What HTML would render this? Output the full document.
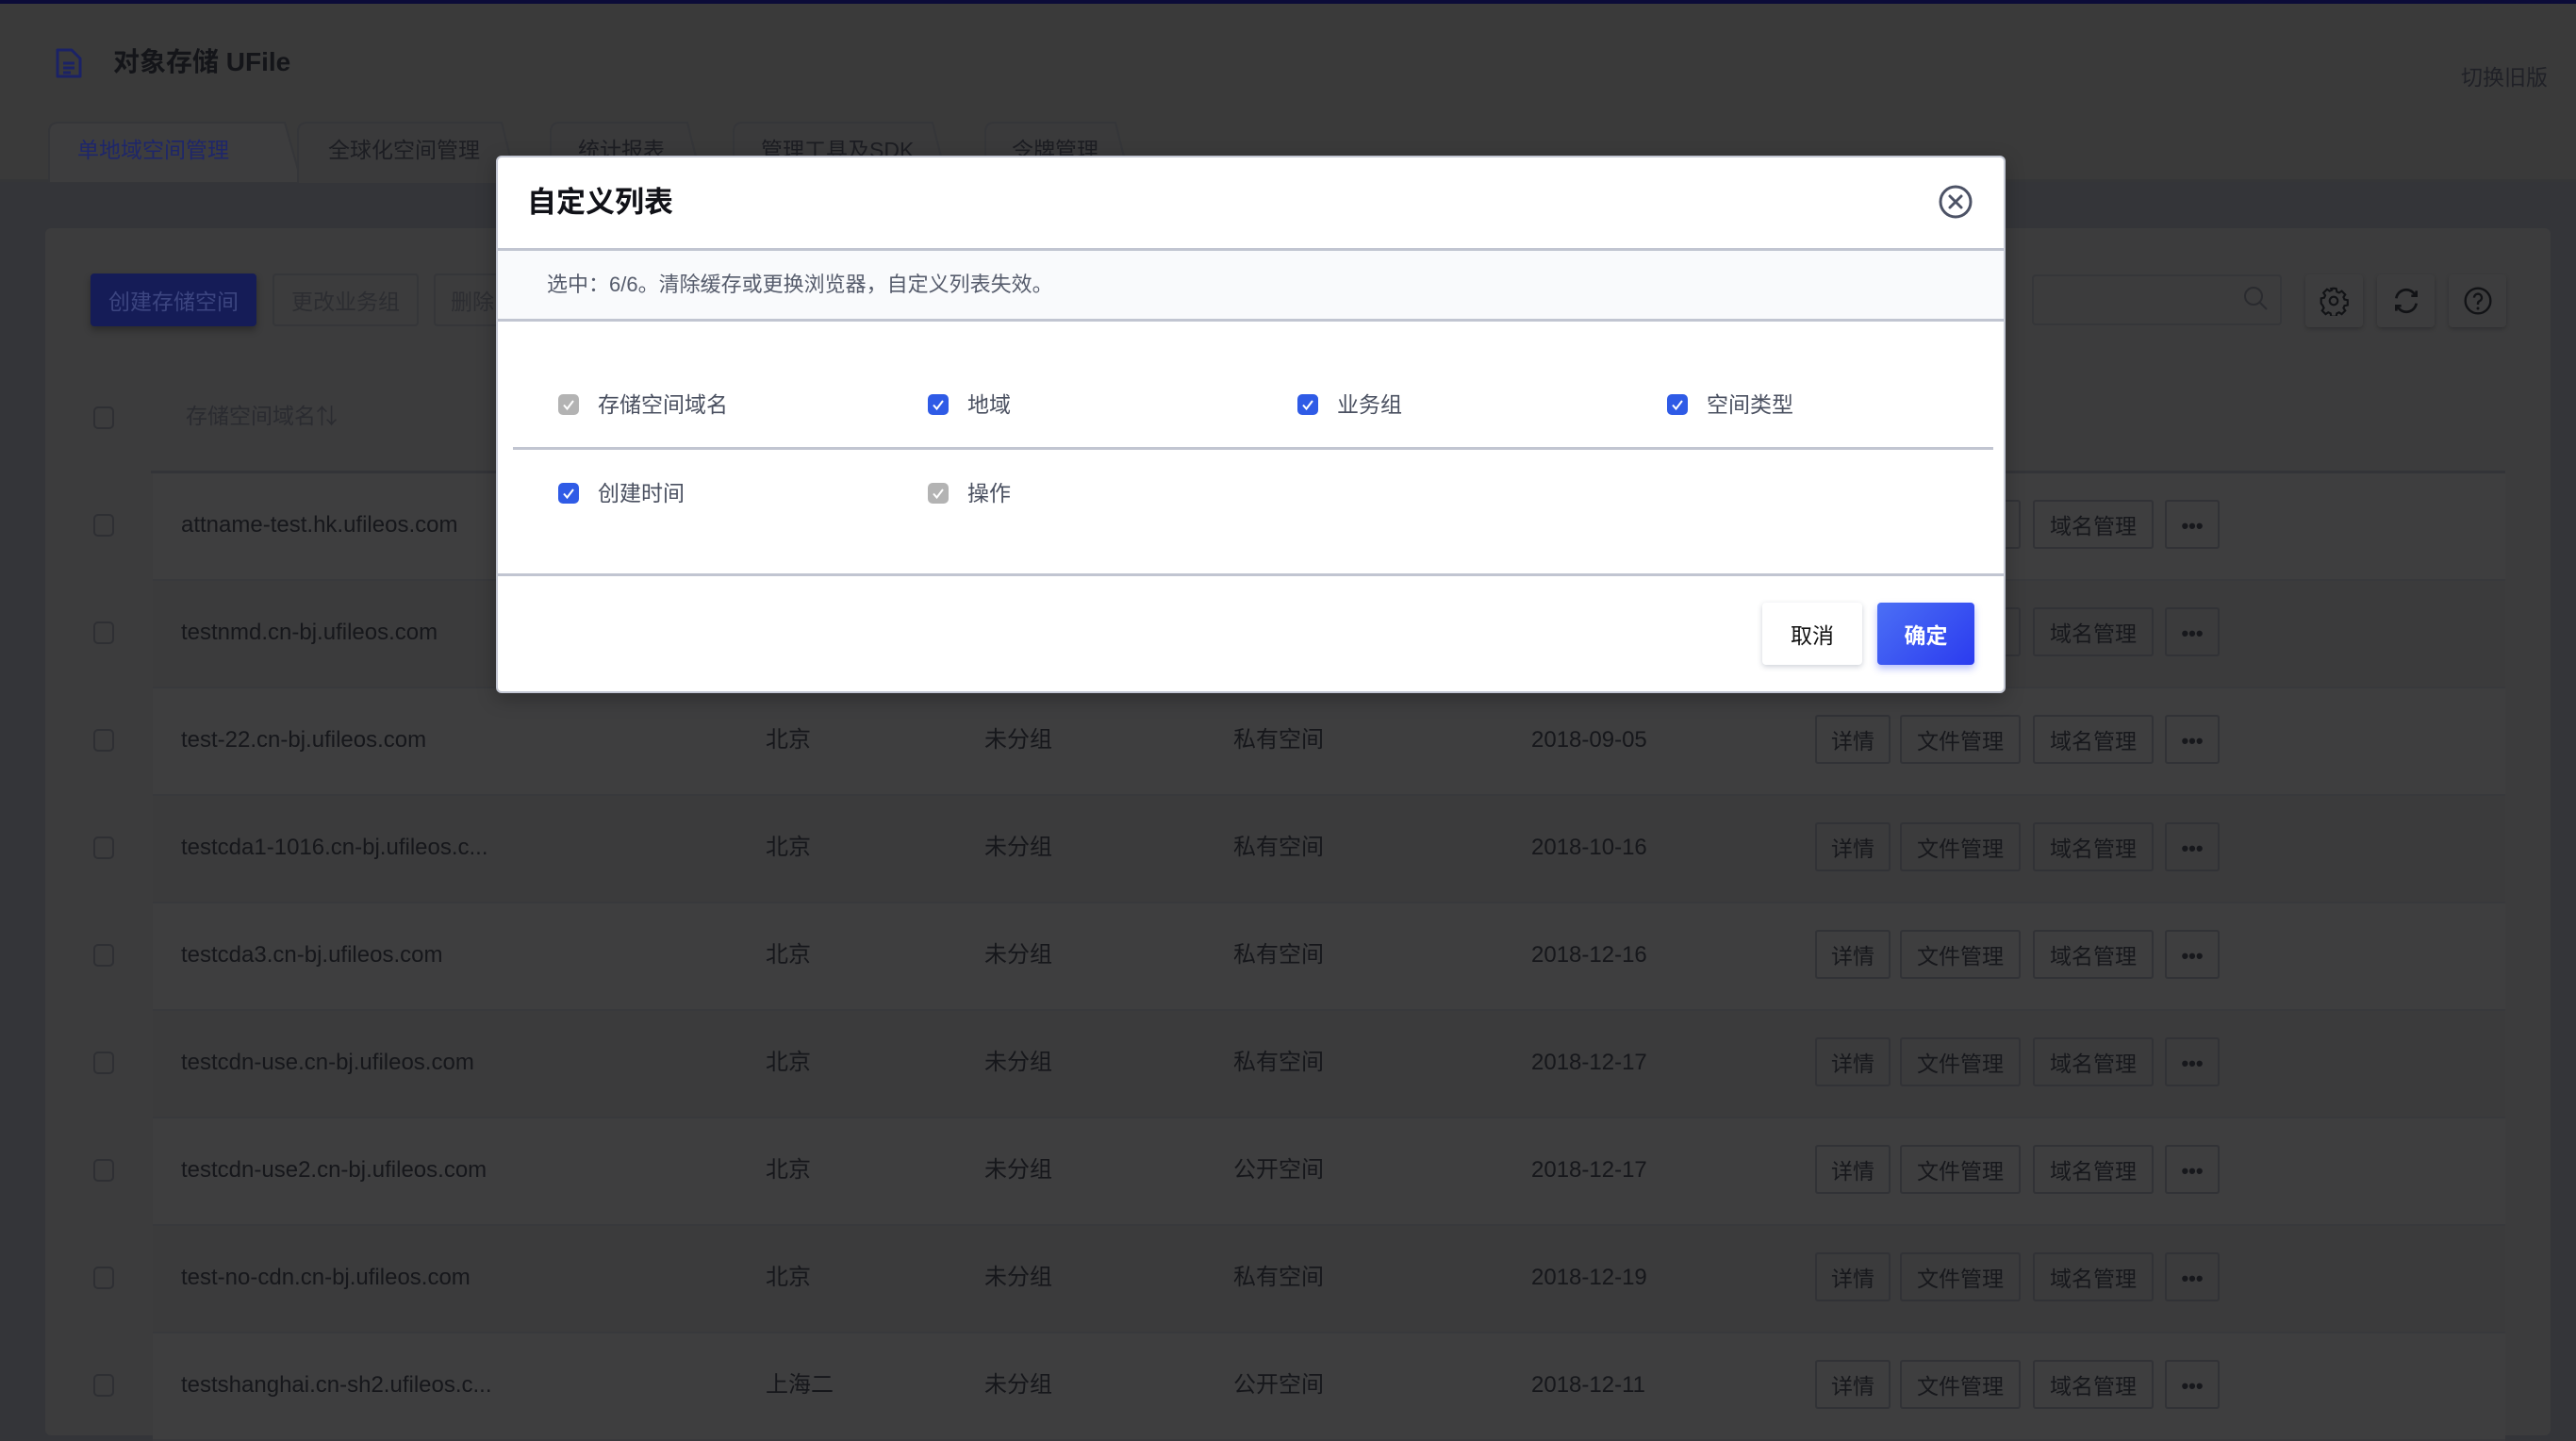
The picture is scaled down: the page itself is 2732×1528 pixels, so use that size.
<!DOCTYPE html>
<html><head><meta charset="utf-8">
<style>
*{margin:0;padding:0;box-sizing:border-box}
body{width:2732px;height:1516px;overflow:hidden;background:#343539;font-family:"Liberation Sans","Noto Sans CJK SC",sans-serif;position:relative}
.a{position:absolute}
.t{position:absolute;white-space:nowrap;line-height:1}
.cb{position:absolute;width:22px;height:22px;border-radius:5px}
.rowcb{position:absolute;width:22px;height:24px;border:2px solid #2e2f33;border-radius:5px}
.ab{position:absolute;height:52px;border:2px solid #313236;border-radius:3px;color:#17181c;font-size:23px;display:flex;align-items:center;justify-content:center}
.cell{position:absolute;font-size:24px;color:#16171b;white-space:nowrap;line-height:1}
</style></head><body>
<div class="a" style="left:0;top:0;width:2732px;height:4px;background:#0b0b38"></div>
<div class="a" style="left:0;top:4px;width:2732px;height:188px;background:#3a3a3a"></div>
<div class="a" style="left:0;top:190px;width:2732px;height:3px;background:#353638"></div>
<svg class="a" style="left:58px;top:50px" width="30" height="34" viewBox="0 0 30 34"><path d="M3 3h15l9 9v19H3z" fill="none" stroke="#1b2266" stroke-width="3" stroke-linejoin="round"/><path d="M9 17h12M9 22h12M9 27h8" stroke="#1b2266" stroke-width="3"/></svg>
<div class="t" style="left:120px;top:52px;font-size:28px;font-weight:bold;color:#141519">对象存储 UFile</div>
<div class="t" style="left:2610px;top:71px;font-size:23px;color:#202127">切换旧版</div>
<svg class="a" style="left:0;top:128px" width="1240" height="66">
<path d="M52 66V12q0-10 10-10h240l18 64z" fill="#3d3d3e" stroke="#353639" stroke-width="2"/>
<path d="M316 66V12q0-10 10-10h206l16 64" fill="#3a3a3b" stroke="#353639" stroke-width="2"/>
<path d="M584 66V12q0-10 10-10h135l16 64" fill="#3a3a3b" stroke="#353639" stroke-width="2"/>
<path d="M778 66V12q0-10 10-10h201l16 64" fill="#3a3a3b" stroke="#353639" stroke-width="2"/>
<path d="M1045 66V12q0-10 10-10h128l16 64" fill="#3a3a3b" stroke="#353639" stroke-width="2"/>
</svg>
<div class="t" style="left:82px;top:148px;font-size:23px;color:#1e266a">单地域空间管理</div>
<div class="t" style="left:348px;top:148px;font-size:23px;color:#1c1d22">全球化空间管理</div>
<div class="t" style="left:613px;top:148px;font-size:23px;color:#1c1d22">统计报表</div>
<div class="t" style="left:807px;top:148px;font-size:23px;color:#1c1d22">管理工具及SDK</div>
<div class="t" style="left:1073px;top:148px;font-size:23px;color:#1c1d22">令牌管理</div>
<div class="a" style="left:48px;top:242px;width:2657px;height:1280px;background:#3c3c3d;border-radius:6px"></div>
<div class="a" style="left:96px;top:290px;width:176px;height:56px;background:#151c57;border-radius:4px;box-shadow:0 4px 8px rgba(0,0,0,.3);color:#3c4580;font-size:23px;display:flex;align-items:center;justify-content:center">创建存储空间</div>
<div class="a" style="left:289px;top:290px;width:155px;height:56px;border:2px solid #353639;border-radius:4px;color:#2c2d31;font-size:23px;display:flex;align-items:center;justify-content:center">更改业务组</div>
<div class="a" style="left:460px;top:290px;width:80px;height:56px;border:2px solid #353639;border-radius:4px;color:#2c2d31;font-size:23px;display:flex;align-items:center;padding-left:16px">删除</div>
<div class="a" style="left:2155px;top:291px;width:265px;height:54px;border:2px solid #353639;border-radius:4px"></div>
<svg class="a" style="left:2378px;top:302px" width="30" height="30" viewBox="0 0 30 30"><circle cx="12" cy="12" r="9" fill="none" stroke="#2a2b2f" stroke-width="2"/><path d="M19 19l7 7" stroke="#2a2b2f" stroke-width="2"/></svg>
<div class="a" style="left:2445px;top:291px;width:61px;height:56px;background:#3d3d3e;border-radius:4px;box-shadow:0 2px 4px rgba(0,0,0,.2)"></div>
<div class="a" style="left:2521px;top:291px;width:61px;height:56px;background:#3d3d3e;border-radius:4px;box-shadow:0 2px 4px rgba(0,0,0,.2)"></div>
<div class="a" style="left:2597px;top:291px;width:61px;height:56px;background:#3d3d3e;border-radius:4px;box-shadow:0 2px 4px rgba(0,0,0,.2)"></div>
<svg class="a" style="left:2459px;top:303px" width="32" height="32" viewBox="0 0 24 24"><path d="M12 2l2 .3.5 2.5 1.8.8 2.1-1.4 2.8 2.8-1.4 2.1.8 1.8 2.5.5v4l-2.5.5-.8 1.8 1.4 2.1-2.8 2.8-2.1-1.4-1.8.8-.5 2.5h-4l-.5-2.5-1.8-.8-2.1 1.4-2.8-2.8 1.4-2.1-.8-1.8L2 14v-4l2.5-.5.8-1.8-1.4-2.1 2.8-2.8 2.1 1.4 1.8-.8L10 2.3z" fill="none" stroke="#121316" stroke-width="1.6"/><circle cx="12" cy="12" r="3.2" fill="none" stroke="#121316" stroke-width="1.6"/></svg>
<svg class="a" style="left:2536px;top:303px" width="32" height="32" viewBox="0 0 24 24"><path d="M4 10a8 8 0 0 1 14-4l2 2M20 4v4h-4M20 14a8 8 0 0 1-14 4l-2-2M4 20v-4h4" fill="none" stroke="#121316" stroke-width="2"/></svg>
<svg class="a" style="left:2612px;top:303px" width="32" height="32" viewBox="0 0 24 24"><circle cx="12" cy="12" r="10" fill="none" stroke="#121316" stroke-width="1.8"/><path d="M9 9.5a3 3 0 1 1 4 2.8c-.8.4-1 1-1 2V15" fill="none" stroke="#121316" stroke-width="1.8"/><circle cx="12" cy="18" r="1.1" fill="#121316"/></svg>
<div class="rowcb" style="left:99px;top:431px"></div>
<div class="t" style="left:197px;top:430px;font-size:23px;color:#2a2b30">存储空间域名⇅</div>
<div class="a" style="left:160px;top:499px;width:2497px;height:3px;background:#333438"></div>
<div id="rows"></div>
<script>
var d=[["attname-test.hk.ufileos.com","北京","未分组","私有空间","2018-08-01"],["testnmd.cn-bj.ufileos.com","北京","未分组","私有空间","2018-08-20"],["test-22.cn-bj.ufileos.com","北京","未分组","私有空间","2018-09-05"],["testcda1-1016.cn-bj.ufileos.c...","北京","未分组","私有空间","2018-10-16"],["testcda3.cn-bj.ufileos.com","北京","未分组","私有空间","2018-12-16"],["testcdn-use.cn-bj.ufileos.com","北京","未分组","私有空间","2018-12-17"],["testcdn-use2.cn-bj.ufileos.com","北京","未分组","公开空间","2018-12-17"],["test-no-cdn.cn-bj.ufileos.com","北京","未分组","私有空间","2018-12-19"],["testshanghai.cn-sh2.ufileos.c...","上海二","未分组","公开空间","2018-12-11"]];
var h="";
d.forEach(function(r,i){var top=502+i*114,c=top+55;
h+='<div class="a" style="left:162px;top:'+top+'px;width:2495px;height:112px;background:'+(i%2==0?'#3e3e3f':'#3b3b3c')+'"></div>';
h+='<div class="a" style="left:162px;top:'+(top+112)+'px;width:2495px;height:2px;background:#38393c"></div>';
h+='<div class="rowcb" style="left:99px;top:'+(c-12)+'px"></div>';
var y=c-12;
h+='<div class="cell" style="left:192px;top:'+y+'px">'+r[0]+'</div>';
h+='<div class="cell" style="left:812px;top:'+y+'px">'+r[1]+'</div>';
h+='<div class="cell" style="left:1044px;top:'+y+'px">'+r[2]+'</div>';
h+='<div class="cell" style="left:1308px;top:'+y+'px">'+r[3]+'</div>';
h+='<div class="cell" style="left:1624px;top:'+y+'px">'+r[4]+'</div>';
var bt=c-27;
h+='<div class="ab" style="left:1925px;top:'+bt+'px;width:80px">详情</div>';
h+='<div class="ab" style="left:2015px;top:'+bt+'px;width:128px">文件管理</div>';
h+='<div class="ab" style="left:2156px;top:'+bt+'px;width:128px">域名管理</div>';
h+='<div class="ab" style="left:2296px;top:'+bt+'px;width:58px;font-weight:bold;font-size:22px;padding-top:4px">•••</div>';
});
document.getElementById("rows").innerHTML=h;
</script>
<div class="a" style="left:526px;top:165px;width:1601px;height:570px;background:#fff;border-radius:6px;border:2px solid #c3c7d3;overflow:hidden;box-shadow:0 6px 20px rgba(0,0,0,.25)">
  <div class="t" style="left:31px;top:32px;font-size:31px;font-weight:bold;color:#111218">自定义列表</div>
  <svg class="a" style="left:1527px;top:28px" width="38" height="38" viewBox="0 0 38 38"><circle cx="19" cy="19" r="16" fill="none" stroke="#4d5366" stroke-width="3"/><path d="M13 13l12 12M25 13L13 25" stroke="#4d5366" stroke-width="3" stroke-linecap="round"/></svg>
  <div class="a" style="left:0;top:96px;width:1601px;height:78px;background:#f9fafc;border-top:3px solid #c1c5d1;border-bottom:3px solid #c1c5d1"></div>
  <div class="t" style="left:52px;top:124px;font-size:22px;color:#565c6c">选中：6/6。清除缓存或更换浏览器，自定义列表失效。</div>
  <div class="a" style="left:16px;top:307px;width:1570px;height:3px;background:#c1c5d1"></div>
  <div class="a" style="left:0;top:441px;width:1601px;height:3px;background:#c1c5d1"></div>
  <div class="a" style="left:1341px;top:472px;width:106px;height:66px;background:#fff;border-radius:4px;box-shadow:0 2px 6px rgba(60,70,100,.25);font-size:23px;color:#111;display:flex;align-items:center;justify-content:center">取消</div>
  <div class="a" style="left:1463px;top:472px;width:103px;height:66px;border-radius:4px;background:linear-gradient(135deg,#4b6ff5,#2b3bef);box-shadow:0 4px 8px rgba(50,70,240,.35);font-size:23px;font-weight:bold;color:#fff;display:flex;align-items:center;justify-content:center">确定</div>
</div>
<svg width="0" height="0" style="position:absolute"><defs><path id="ck" d="M6 11.5l3.5 4L16 7" fill="none" stroke="#fff" stroke-width="2"/></defs></svg>
<div class="cb" style="left:592px;top:418px;background:#b3b3b3"><svg width="22" height="22"><use href="#ck"/></svg></div>
<div class="t" style="left:634px;top:418px;font-size:23px;color:#4a5060">存储空间域名</div>
<div class="cb" style="left:984px;top:418px;background:#2f5be6"><svg width="22" height="22"><use href="#ck"/></svg></div>
<div class="t" style="left:1026px;top:418px;font-size:23px;color:#4a5060">地域</div>
<div class="cb" style="left:1376px;top:418px;background:#2f5be6"><svg width="22" height="22"><use href="#ck"/></svg></div>
<div class="t" style="left:1418px;top:418px;font-size:23px;color:#4a5060">业务组</div>
<div class="cb" style="left:1768px;top:418px;background:#2f5be6"><svg width="22" height="22"><use href="#ck"/></svg></div>
<div class="t" style="left:1810px;top:418px;font-size:23px;color:#4a5060">空间类型</div>
<div class="cb" style="left:592px;top:512px;background:#2f5be6"><svg width="22" height="22"><use href="#ck"/></svg></div>
<div class="t" style="left:634px;top:512px;font-size:23px;color:#4a5060">创建时间</div>
<div class="cb" style="left:984px;top:512px;background:#b3b3b3"><svg width="22" height="22"><use href="#ck"/></svg></div>
<div class="t" style="left:1026px;top:512px;font-size:23px;color:#4a5060">操作</div>
</body></html>
